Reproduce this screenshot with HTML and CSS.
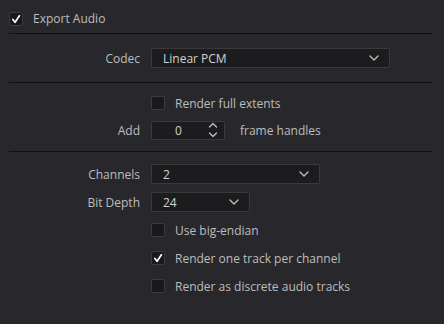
FILE: index.html
```html
<!DOCTYPE html>
<html lang="en">
<head>
    <meta charset="UTF-8">
    <title>Export Audio</title>
    <link rel="stylesheet" href="styles.css">
</head>
<body>
    <!-- Header -->
    <div class="section header">
        <label class="check">
            <span class="box checked"><svg viewBox="0 0 14 14"><path d="M3.3 7.6 L5.9 10.8 L11 3.2"/></svg></span>
            <span>Export Audio</span>
        </label>
    </div>

    <!-- Codec -->
    <div class="section codec">
        <div class="row">
            <span class="label">Codec</span>
            <div class="select wide"><span>Linear PCM</span><svg class="chev" viewBox="0 0 10 6"><path d="M1 1 L5 5 L9 1"/></svg></div>
        </div>
    </div>

    <!-- Extents -->
    <div class="section extents">
        <div class="row">
            <span class="label"></span>
            <label class="check"><span class="box"></span><span>Render full extents</span></label>
        </div>
        <div class="row">
            <span class="label">Add</span>
            <div class="spin">
                <span class="spin-value">0</span>
                <svg class="arrows" viewBox="0 0 10 16"><path d="M1.5 5 L5 1.5 L8.5 5"/><path d="M1.5 11 L5 14.5 L8.5 11"/></svg>
            </div>
            <span class="after">frame handles</span>
        </div>
    </div>

    <!-- Channels -->
    <div class="section channels">
        <div class="row">
            <span class="label">Channels</span>
            <div class="select mid"><span>2</span><svg class="chev" viewBox="0 0 10 6"><path d="M1 1 L5 5 L9 1"/></svg></div>
        </div>
        <div class="row">
            <span class="label">Bit Depth</span>
            <div class="select small"><span>24</span><svg class="chev" viewBox="0 0 10 6"><path d="M1 1 L5 5 L9 1"/></svg></div>
        </div>
        <div class="row">
            <span class="label"></span>
            <label class="check"><span class="box"></span><span>Use big-endian</span></label>
        </div>
        <div class="row">
            <span class="label"></span>
            <label class="check">
                <span class="box checked"><svg viewBox="0 0 14 14"><path d="M3.3 7.6 L5.9 10.8 L11 3.2"/></svg></span>
                <span>Render one track per channel</span>
            </label>
        </div>
        <div class="row">
            <span class="label"></span>
            <label class="check"><span class="box"></span><span>Render as discrete audio tracks</span></label>
        </div>
    </div>
</body>
</html>
```

FILE: styles.css
```css
/* Global Styles */
* {
    margin: 0;
    padding: 0;
    box-sizing: border-box;
}

body {
    font-family: "Open Sans", "Noto Sans", sans-serif;
    font-size: 12px;
    background-color: #28282c;
    color: #bdbdbd;
    width: 444px;
    height: 324px;
    overflow: hidden;
}

/* Sections split by dark rules */
.section {
    margin: 0 12px 0 9px;
    border-bottom: 1px solid #111113;
}

.header {
    height: 34px;
    padding-top: 10px;
}

.codec {
    padding: 14px 0 14px;
}

.extents {
    padding: 10px 0 11px;
    display: flex;
    flex-direction: column;
    gap: 7px;
}

.channels {
    border-bottom: none;
    padding-top: 12px;
    display: flex;
    flex-direction: column;
    gap: 8px;
}

/* Form rows */
.row {
    display: flex;
    align-items: center;
    height: 20px;
}

.label {
    width: 131px;
    text-align: right;
    margin-right: 11px;
    flex-shrink: 0;
}

/* Checkboxes */
.check {
    display: flex;
    align-items: center;
    gap: 10px;
}

.box {
    width: 14px;
    height: 14px;
    background-color: #19191b;
    border: 1px solid #3c3c3f;
    border-radius: 2px;
    display: flex;
}

.box svg {
    width: 12px;
    height: 12px;
}

.box svg path {
    fill: none;
    stroke: #fff;
    stroke-width: 2;
    stroke-linecap: round;
    stroke-linejoin: round;
}

/* Dropdowns */
.select {
    height: 20px;
    background-color: #1c1c1e;
    border: 1px solid #3a3a3d;
    border-radius: 2px;
    display: flex;
    align-items: center;
    justify-content: space-between;
    padding: 0 10px 0 11px;
    color: #d2d2d2;
}

.select.wide {
    width: 239px;
}

.select.mid {
    width: 169px;
}

.select.small {
    width: 99px;
}

.chev {
    width: 10px;
    height: 6px;
}

.chev path,
.arrows path {
    fill: none;
    stroke: #bdbdbd;
    stroke-width: 1.4;
    stroke-linecap: round;
    stroke-linejoin: round;
}

/* Spin box */
.spin {
    width: 74px;
    height: 19px;
    background-color: #1c1c1e;
    border: 1px solid #3a3a3d;
    border-radius: 2px;
    display: flex;
    align-items: center;
    padding-left: 23px;
    color: #d2d2d2;
}

.spin-value {
    width: 33px;
}

.arrows {
    width: 10px;
    height: 16px;
}

.after {
    margin-left: 15px;
}
```
